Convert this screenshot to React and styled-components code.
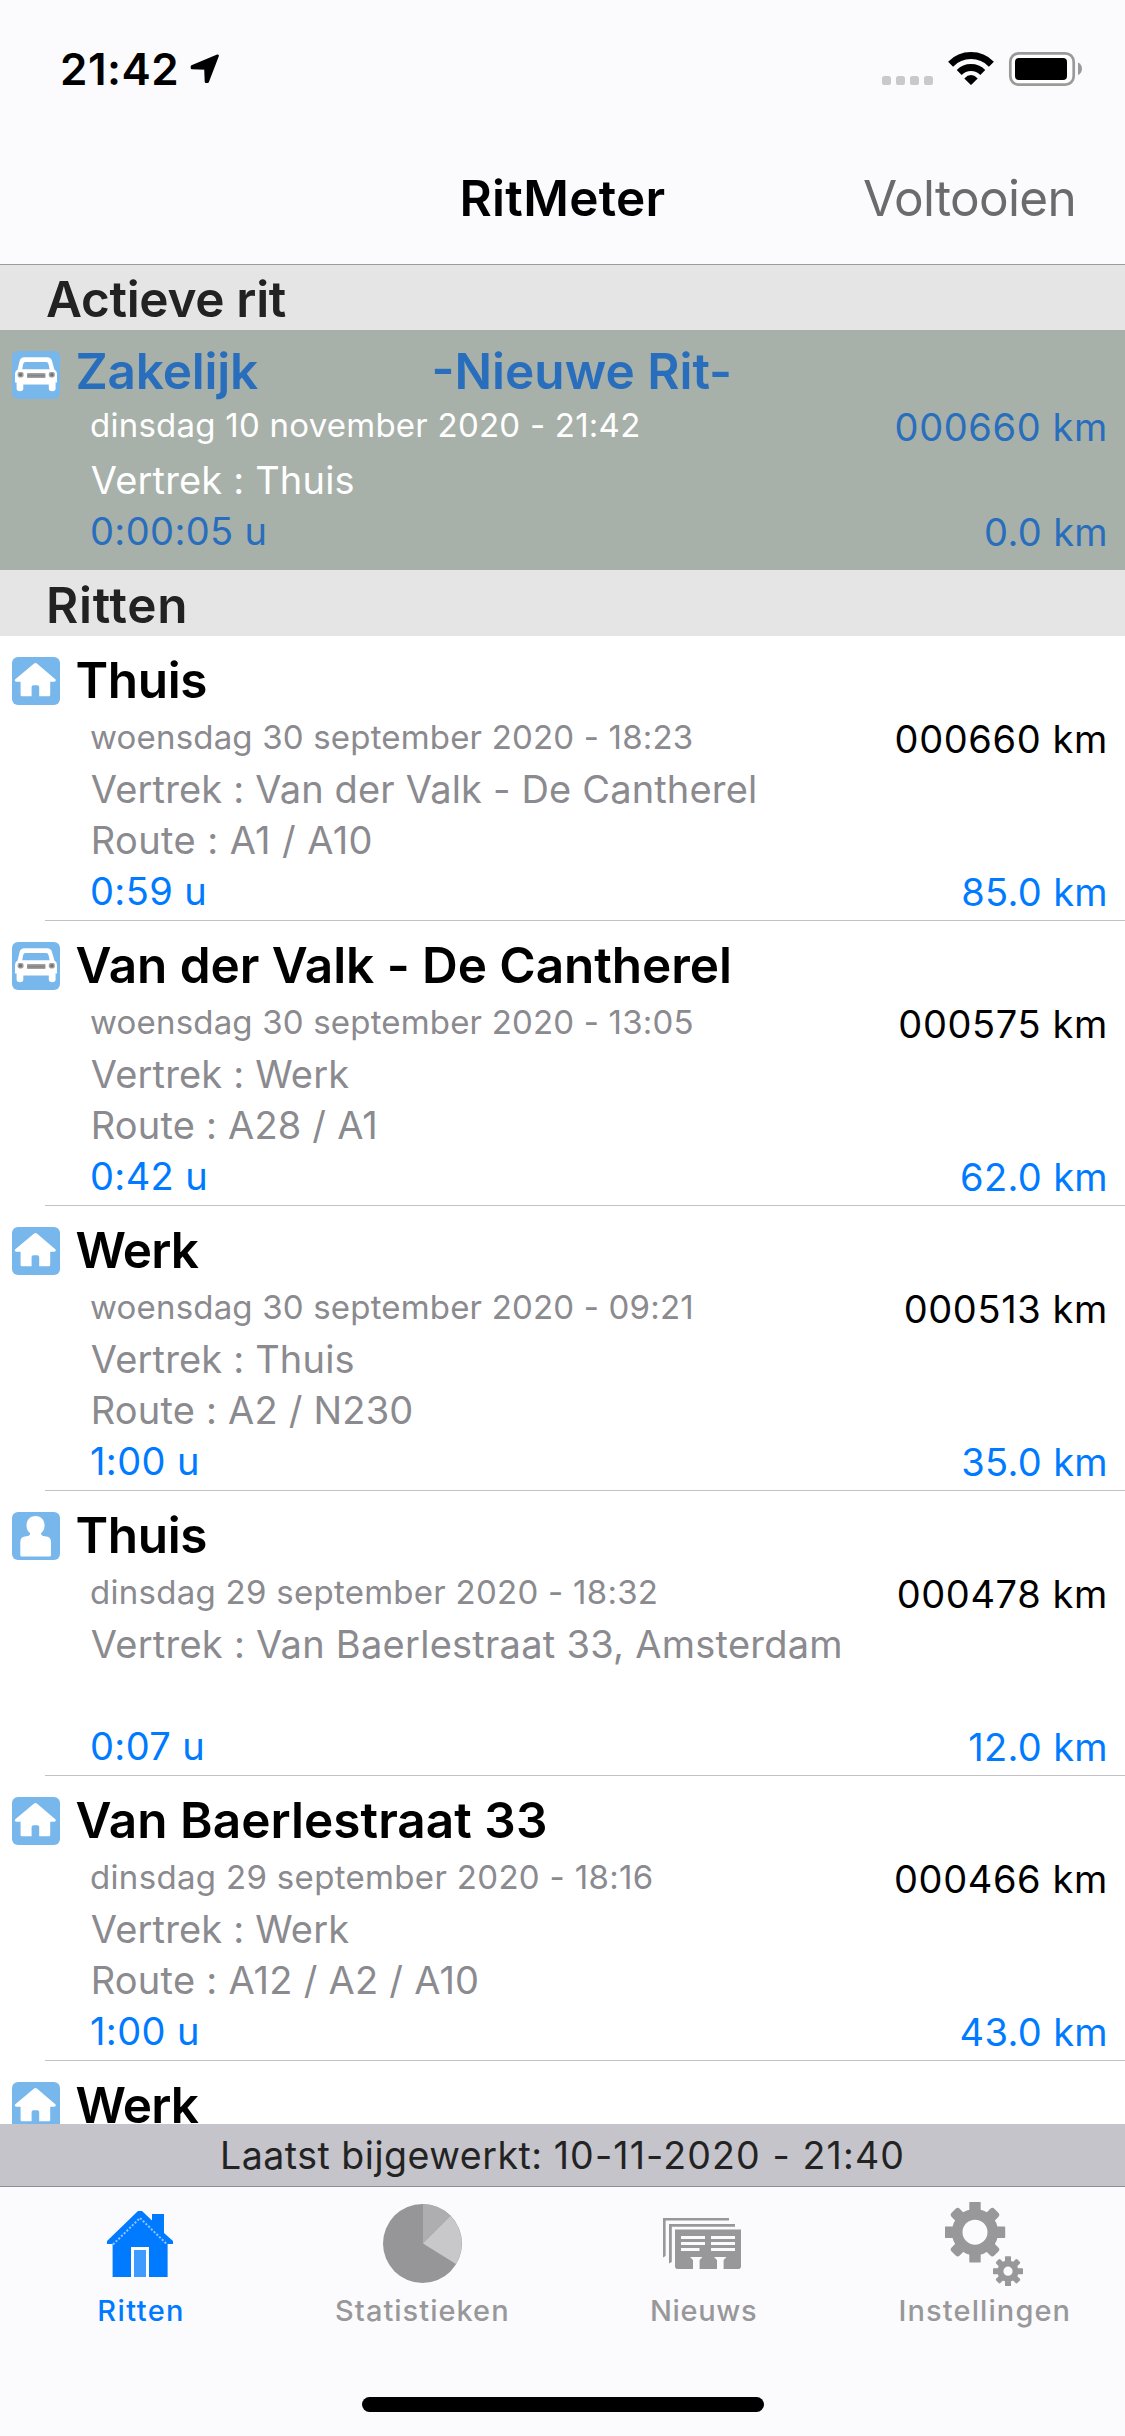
import React from "react";
import styled, { createGlobalStyle, css } from "styled-components";

const GlobalStyle = createGlobalStyle`
  *, *::before, *::after { box-sizing: border-box; }
  body { margin: 0; background: #fff; }
`;

const Screen = styled.div`
  display: flex;
  flex-direction: column;
  width: 1125px;
  height: 2436px;
  overflow: hidden;
  background: #fff;
  color: #000;
  font-family: Inter, Roboto, "Liberation Sans", sans-serif;
  font-size: 38px;
  white-space: nowrap;
`;

/* ---------- top ---------- */

const TopArea = styled.header`
  flex: none;
  background: #fbfbfd;
  border-bottom: 1px solid #9b9b9e;
`;

const StatusBar = styled.div`
  display: flex;
  align-items: center;
  height: 138px;
  padding: 0 43px 0 60px;
`;

const Clock = styled.span`
  font-size: 44px;
  font-weight: 600;
  line-height: 60px;
  letter-spacing: 0.5px;
  margin-right: 11px;
`;

const StatusIcons = styled.div`
  display: flex;
  margin-left: auto;
`;

const NavBar = styled.div`
  display: grid;
  grid-template-columns: 1fr auto 1fr;
  align-items: center;
  height: 126px;
  padding: 0 49px 6px;
  font-size: 49.5px;
  line-height: 60px;
`;

const NavTitle = styled.h1`
  grid-column: 2;
  margin: 0;
  font-size: inherit;
  font-weight: 600;
  letter-spacing: 0.28px;
`;

const NavAction = styled.span`
  justify-self: end;
  color: #6b6b6c;
  letter-spacing: -0.7px;
`;

/* ---------- list ---------- */

const List = styled.main`
  flex: 1;
  min-height: 0;
  overflow: hidden;
`;

const SectionHeader = styled.h2`
  display: flex;
  align-items: center;
  height: ${(p) => p.$height}px;
  margin: 0;
  padding: 3px 0 0 46px;
  background: #e5e5e5;
  color: #222;
  font-size: 49.5px;
  font-weight: 600;
  line-height: 60px;
  letter-spacing: ${(p) => p.$track}px;
`;

const TripRow = styled.article`
  display: flex;
  flex-direction: column;
  height: 285px;
  padding-top: 14px;
  --title: #000;
  --meta: #8a8a8f;
  --odometer: #000;
  --accent: #007aff;
  ${(p) =>
    p.$active &&
    css`
      height: 240px;
      padding-top: 11px;
      background: #a7b0a9;
      --title: #286ebc;
      --meta: #fff;
      --odometer: #286ebc;
      --accent: #286ebc;
    `}
`;

const TripHead = styled.div`
  display: flex;
  align-items: flex-start;
  flex: none;
  height: ${(p) => (p.$active ? 59 : 62)}px;
  padding-left: 12px;
`;

const IconSlot = styled.span`
  flex: none;
  width: 48px;
  height: 48px;
  margin: ${(p) => (p.$active ? 10 : 7)}px 15.5px 0 0;
  svg { display: block; }
`;

const TripTitle = styled.h3`
  margin: 0;
  min-width: ${(p) => (p.$active ? 356 : 0)}px;
  color: var(--title);
  font-size: 49.5px;
  font-weight: 600;
  line-height: 60px;
  letter-spacing: ${(p) => p.$track || 0}px;
`;

const Line = styled.div`
  display: flex;
  justify-content: space-between;
  align-items: flex-start;
  flex: none;
  height: ${(p) => p.$height || 51}px;
  padding: 0 17px 0 90px;
`;

const DateText = styled.time`
  color: var(--meta);
  font-size: 33px;
  line-height: 50px;
  letter-spacing: ${(p) => p.$track || 0.18}px;
`;

const Odometer = styled.span`
  color: var(--odometer);
  line-height: 54px;
  letter-spacing: 0.62px;
`;

const Detail = styled.span`
  padding-left: 0.7px;
  color: var(--meta);
  line-height: 51px;
  letter-spacing: ${(p) => p.$track || 0.17}px;
`;

const Duration = styled.span`
  color: var(--accent);
  line-height: 51px;
  letter-spacing: 0.38px;
`;

const Distance = styled.span`
  color: var(--accent);
  line-height: 53px;
  letter-spacing: 0.35px;
`;

const Divider = styled.hr`
  flex: none;
  width: auto;
  height: 1px;
  margin: auto 0 0 45px;
  border: 0;
  background: #c3c3c5;
`;

/* ---------- bottom ---------- */

const SyncBar = styled.div`
  display: flex;
  align-items: center;
  justify-content: center;
  flex: none;
  height: 62px;
  background: #c5c4ca;
  color: #232324;
  font-size: 37.5px;
  white-space: pre;
`;

const SyncLabel = styled.span`
  letter-spacing: 0.52px;
`;

const SyncTime = styled.time`
  letter-spacing: 1.14px;
`;

const TabBar = styled.nav`
  display: flex;
  flex-direction: column;
  align-items: center;
  flex: none;
  height: 250px;
  border-top: 1px solid #8f8e93;
  background: #fbfbfd;
`;

const Tabs = styled.div`
  display: grid;
  grid-template-columns: repeat(4, 1fr);
  width: 100%;
`;

const Tab = styled.div`
  display: flex;
  flex-direction: column;
  align-items: center;
  padding-top: 14px;
  color: ${(p) => (p.$selected ? "#007aff" : "#98989a")};
`;

const TabIcon = styled.span`
  display: flex;
  align-items: center;
  height: 85px;
  padding-left: ${(p) => Math.max(p.$nudge || 0, 0)}px;
  padding-right: ${(p) => Math.max(-(p.$nudge || 0), 0)}px;
`;

const TabLabel = styled.span`
  margin-top: 7px;
  padding-left: 1px;
  font-size: 29px;
  font-weight: 500;
  line-height: 36px;
  letter-spacing: ${(p) => p.$track}px;
`;

const HomeIndicator = styled.div`
  width: 402px;
  height: 15px;
  margin: auto 0 24px;
  border-radius: 8px;
  background: #000;
`;

/* ---------- drawings ---------- */

const LocationArrow = () => (
  <svg width="30" height="30" viewBox="0 0 30 30">
    <path
      d="M27.6 1.8 L2 12.4 L2 14 L15.5 14.4 L16 27.8 L17.6 27.8 Z"
      fill="#000" stroke="#000" strokeWidth="2.6" strokeLinejoin="round"
    />
  </svg>
);

const StatusGlyphs = () => (
  <svg width="200" height="36" viewBox="882 51 200 36">
    {[882, 896, 910, 924].map((x) => (
      <rect key={x} x={x} y="76" width="9" height="9" rx="2.6" fill="#c9c9ca" />
    ))}
    <path d="M950.6 64.2 A28.5 28.5 0 0 1 991.4 64.2" fill="none" stroke="#000" strokeWidth="7" />
    <path d="M959.2 72.4 A16.8 16.8 0 0 1 982.8 72.4" fill="none" stroke="#000" strokeWidth="7" />
    <path d="M964.3 78.4 Q971 71.8 977.7 78.4 L971.6 84.6 Q971 85.2 970.4 84.6 Z" fill="#000" />
    <rect x="1010.3" y="53.3" width="63.4" height="31.4" rx="8.5" fill="#fff" stroke="#9a9a9b" strokeWidth="2.7" />
    <rect x="1015" y="58" width="52" height="22" rx="4" fill="#000" />
    <path d="M1078 62.5 C1083.3 64.5 1083.3 73 1078 75 Z" fill="#9a9a9b" />
  </svg>
);

const Badge = ({ children }) => (
  <svg width="48" height="48" viewBox="0 0 48 48">
    <rect width="48" height="48" rx="6" fill="#78b7eb" />
    {children}
  </svg>
);

const CarBadge = () => (
  <Badge>
    <path
      d="M12.5 6.3 H35 Q39 6.3 40 10 L42.4 18.6 Q45 20 45 23 V31.5 H43.6 V37.6 Q43.6 40.3 40.3 40.3 Q36.8 40.3 36.8 37.6 V33.5 H11.3 V37.6 Q11.3 40.3 8 40.3 Q4.6 40.3 4.6 37.6 V31.5 H3 V23 Q3 20 5.6 18.6 L7.6 10 Q8.6 6.3 12.5 6.3 Z"
      fill="#fff"
    />
    <path d="M13.5 11 H34 Q36 11 36.5 13 L37.6 18.2 H10.2 L11.2 13 Q11.7 11 13.5 11 Z" fill="#78b7eb" />
    <rect x="15" y="22" width="18.5" height="5" rx="0.8" fill="#a0a0a0" />
    <rect x="15.6" y="23.6" width="17.3" height="2" fill="#858585" />
    <rect x="5.6" y="21" width="6" height="5.4" rx="1.8" fill="#a2a2a2" />
    <rect x="36.8" y="21" width="6" height="5.4" rx="1.8" fill="#a2a2a2" />
    <rect x="7" y="22.2" width="3" height="3" rx="1" fill="#707070" />
    <rect x="38.4" y="22.2" width="3" height="3" rx="1" fill="#707070" />
  </Badge>
);

const HouseBadge = () => (
  <Badge>
    <path
      d="M21.8 6.8 Q23.5 5.2 25.2 6.8 L43.6 22.6 Q44.4 24.6 42 24.8 H38.2 V38 Q38.2 39.2 37 39.2 H27.2 V30 Q27.2 28.2 25.4 28.2 H21.4 Q19.6 28.2 19.6 30 V39.2 H9.8 Q8.6 39.2 8.6 38 V24.8 H4.6 Q2.2 24.6 3 22.6 Z"
      fill="#fff"
    />
  </Badge>
);

const PersonBadge = () => (
  <Badge>
    <path
      d="M23.5 4 C29 4 32.6 8 32.6 13.4 C32.6 17.5 30.8 19.6 29 21.2 Q29.2 24 33 24.2 Q39 24.4 39 30 V43 Q39 44.5 37.5 44.5 H9.8 Q8.3 44.5 8.3 43 V30 Q8.3 24.4 14.3 24.2 Q18 24 18.2 21.2 C16.2 19.6 14.5 17.5 14.5 13.4 C14.5 8 18 4 23.5 4 Z"
      fill="#fff"
    />
  </Badge>
);

const badges = { car: CarBadge, house: HouseBadge, person: PersonBadge };

const TripsIcon = () => (
  <svg width="66" height="66" viewBox="0 0 66 66">
    <path d="M31 0 H35 L45 9.5 V3 H57 V22 L66 30 V33 H60.6 V66 H5.6 V33 H0 V30 Z" fill="#007aff" />
    <path d="M6 33.5 L33 7 L60.2 33.5" fill="none" stroke="#8fc4ff" strokeWidth="2" strokeDasharray="2.1 1.7" />
    <rect x="24" y="36" width="18" height="30" fill="#fff" />
    <rect x="27" y="39" width="12" height="27" fill="#409bff" />
  </svg>
);

const StatsIcon = () => (
  <svg width="79" height="79" viewBox="0 0 79 79">
    <circle cx="39.5" cy="39.5" r="39.5" fill="#969698" />
    <path d="M40 39.5 V0 A39.5 39.5 0 0 1 67.5 12 Z" fill="#aeaeb0" />
    <path d="M40 39.5 L67.5 12 A39.5 39.5 0 0 1 73 60 Z" fill="#c8c8ca" />
  </svg>
);

const NewsIcon = () => (
  <svg width="78" height="51" viewBox="0 0 78 51">
    <g fill="#98989a">
      <path d="M0 0 H66 V2.6 H2.6 V38 L0 39.5 Z" />
      <path d="M6 6 H72 V8.8 H8.8 V44 L6 45.5 Z" />
      <path d="M12 11.5 H78 V51 H12 Z" />
    </g>
    <g fill="#fbfbfd">
      <rect x="18" y="18" width="24" height="3" />
      <rect x="18" y="24" width="24" height="3" />
      <rect x="18" y="30" width="18.5" height="3" />
      <rect x="48" y="18" width="24" height="3" />
      <rect x="48" y="24" width="24" height="3" />
      <rect x="48" y="30" width="24" height="3" />
      <path d="M27 39 H39.5 L36.6 42 V51 H30 V42 Z" />
      <path d="M51 39 H63.5 L60.6 42 V51 H54 V42 Z" />
      <path d="M12 49.2 L13.6 51 H12 Z M78 49.2 L76.4 51 H78 Z" />
    </g>
  </svg>
);

const Gear = ({ cx, cy, reach, ring, ringWidth, tooth }) => (
  <g transform={`translate(${cx} ${cy})`} fill="#98989a">
    <circle r={ring} fill="none" stroke="#98989a" strokeWidth={ringWidth} />
    {[0, 45, 90, 135, 180, 225, 270, 315].map((a) => (
      <rect
        key={a} x={-tooth / 2} y={-reach} width={tooth} height={reach - ring}
        rx={a % 90 ? tooth / 4 : 0.6} transform={`rotate(${a})`}
      />
    ))}
  </g>
);

const SettingsIcon = () => (
  <svg width="78" height="84" viewBox="0 0 78 84">
    <Gear cx={30} cy={30.2} reach={30.2} ring={17.8} ringWidth={10.6} tooth={11.4} />
    <Gear cx={63} cy={69.2} reach={15} ring={7.6} ringWidth={6} tooth={6} />
  </svg>
);

/* ---------- data ---------- */

const activeTrip = {
  icon: "car", title: "Zakelijk", track: -0.2, note: "-Nieuwe Rit-",
  date: "dinsdag 10 november 2020 - 21:42", dateTrack: 0.24, odometer: "000660 km",
  from: "Vertrek : Thuis", duration: "0:00:05 u", distance: "0.0 km",
};

const trips = [
  { icon: "house", title: "Thuis", track: -0.35, date: "woensdag 30 september 2020 - 18:23", odometer: "000660 km",
    from: "Vertrek : Van der Valk - De Cantherel", route: "Route : A1 / A10", routeTrack: 0.42, duration: "0:59 u", distance: "85.0 km" },
  { icon: "car", title: "Van der Valk - De Cantherel", track: -0.06, date: "woensdag 30 september 2020 - 13:05", odometer: "000575 km",
    from: "Vertrek : Werk", route: "Route : A28 / A1", routeTrack: 0.2, duration: "0:42 u", distance: "62.0 km" },
  { icon: "house", title: "Werk", track: -0.8, date: "woensdag 30 september 2020 - 09:21", odometer: "000513 km",
    from: "Vertrek : Thuis", route: "Route : A2 / N230", routeTrack: 0.2, duration: "1:00 u", distance: "35.0 km" },
  { icon: "person", title: "Thuis", track: -0.35, date: "dinsdag 29 september 2020 - 18:32", dateTrack: 0.27, odometer: "000478 km",
    from: "Vertrek : Van Baerlestraat 33, Amsterdam", fromTrack: 0.26, route: "", duration: "0:07 u", distance: "12.0 km" },
  { icon: "house", title: "Van Baerlestraat 33", track: 0.05, date: "dinsdag 29 september 2020 - 18:16", dateTrack: 0.33, odometer: "000466 km",
    from: "Vertrek : Werk", route: "Route : A12 / A2 / A10", routeTrack: 0.25, duration: "1:00 u", distance: "43.0 km" },
  { icon: "house", title: "Werk", track: -0.8 },
];

const tabs = [
  { label: "Ritten", Icon: TripsIcon, selected: true, track: 1.4, nudge: -1.2 },
  { label: "Statistieken", Icon: StatsIcon, track: 1.02, nudge: 2 },
  { label: "Nieuws", Icon: NewsIcon, track: 0.65, nudge: -2 },
  { label: "Instellingen", Icon: SettingsIcon, track: 1.1 },
];

function Trip({ trip, active }) {
  const Icon = badges[trip.icon];
  return (
    <TripRow $active={active}>
      <TripHead $active={active}>
        <IconSlot $active={active}><Icon /></IconSlot>
        <TripTitle $active={active} $track={trip.track}>{trip.title}</TripTitle>
        {trip.note && <TripTitle as="span">{trip.note}</TripTitle>}
      </TripHead>
      {trip.date && (
        <>
          <Line $height={active ? 55 : 52}>
            <DateText $track={trip.dateTrack}>{trip.date}</DateText>
            <Odometer>{trip.odometer}</Odometer>
          </Line>
          <Line><Detail $track={trip.fromTrack}>{trip.from}</Detail></Line>
          {!active && <Line><Detail $track={trip.routeTrack}>{trip.route}</Detail></Line>}
          <Line>
            <Duration>{trip.duration}</Duration>
            <Distance>{trip.distance}</Distance>
          </Line>
        </>
      )}
      {!active && <Divider />}
    </TripRow>
  );
}

export default function App() {
  return (
    <Screen>
      <GlobalStyle />
      <TopArea>
        <StatusBar>
          <Clock>21:42</Clock>
          <LocationArrow />
          <StatusIcons><StatusGlyphs /></StatusIcons>
        </StatusBar>
        <NavBar>
          <NavTitle>RitMeter</NavTitle>
          <NavAction>Voltooien</NavAction>
        </NavBar>
      </TopArea>
      <List>
        <SectionHeader $height={65} $track={-0.3}>Actieve rit</SectionHeader>
        <Trip trip={activeTrip} active />
        <SectionHeader $height={66} $track={0.75}>Ritten</SectionHeader>
        {trips.map((trip, i) => <Trip key={i} trip={trip} />)}
      </List>
      <SyncBar>
        <SyncLabel>{"Laatst bijgewerkt: "}</SyncLabel>
        <SyncTime>10-11-2020 - 21:40</SyncTime>
      </SyncBar>
      <TabBar>
        <Tabs>
          {tabs.map(({ label, Icon, selected, track, nudge }) => (
            <Tab key={label} $selected={selected}>
              <TabIcon $nudge={nudge}><Icon /></TabIcon>
              <TabLabel $track={track}>{label}</TabLabel>
            </Tab>
          ))}
        </Tabs>
        <HomeIndicator />
      </TabBar>
    </Screen>
  );
}
